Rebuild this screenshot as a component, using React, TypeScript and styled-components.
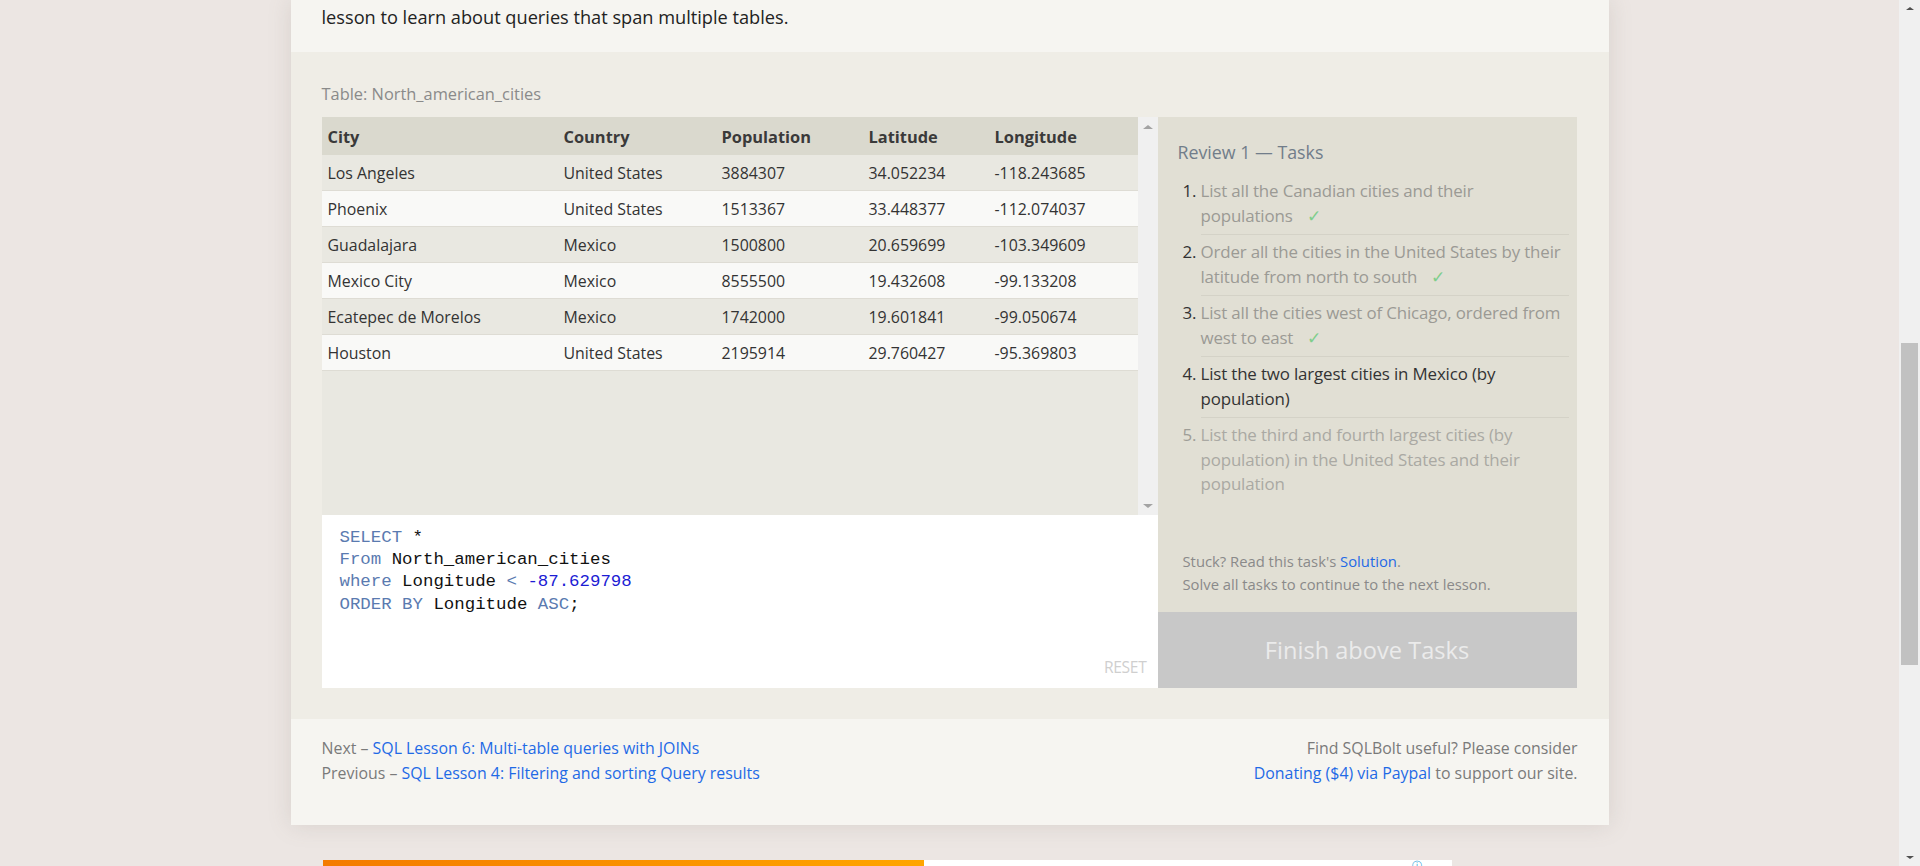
import React from "react";
import styled, { createGlobalStyle } from "styled-components";

const GlobalStyle = createGlobalStyle`
  html, body {
    margin: 0;
    padding: 0;
    height: 100%;
    overflow: hidden;
  }
  body {
    font-family: "Open Sans", "Noto Sans", sans-serif;
    background: #ece6e3;
  }
`;

const Viewport = styled.div`
  display: flex;
  height: 100vh;
`;

const Main = styled.div`
  flex: 1;
  overflow: hidden;
  background: #ece6e3;
`;

const PageScroll = styled.div`
  width: 21px;
  flex-shrink: 0;
  background: #f0f0f0;
  display: flex;
  flex-direction: column;
  align-items: center;
`;

const Arrow = styled.div<{ dir: "up" | "down"; color: string; size: number }>`
  width: 0;
  height: 0;
  border-left: ${(p) => p.size}px solid transparent;
  border-right: ${(p) => p.size}px solid transparent;
  ${(p) =>
    p.dir === "up"
      ? `border-bottom: ${Math.round(p.size * 0.8)}px solid ${p.color};`
      : `border-top: ${Math.round(p.size * 0.8)}px solid ${p.color};`}
`;

const ArrowBox = styled.div`
  height: 17px;
  display: flex;
  align-items: center;
  justify-content: center;
`;

const Track = styled.div`
  flex: 1;
  width: 100%;
  display: flex;
  flex-direction: column;
  align-items: center;
`;

const Thumb = styled.div`
  margin-top: 326px;
  width: 17px;
  height: 322px;
  background: #c1c1c1;
`;

const Card = styled.div`
  width: 1318px;
  margin: 0 auto;
  background: #f6f5f1;
  box-shadow: 0 0 22px rgba(120, 110, 100, 0.18);
`;

const Intro = styled.p`
  margin: 0;
  padding: 4px 31px 21px;
  font-size: 18.2px;
  line-height: 27px;
  color: #222;
`;

const Exercise = styled.section`
  background: #efede6;
  padding: 30px 31px 31px;
`;

const TableLabel = styled.div`
  font-size: 16.4px;
  line-height: 24px;
  color: #8a8a8a;
  margin-bottom: 11px;
`;

const Workspace = styled.div`
  display: flex;
  height: 571px;
`;

const LeftColumn = styled.div`
  width: 836px;
  flex-shrink: 0;
  display: flex;
  flex-direction: column;
`;

const Results = styled.div`
  height: 398px;
  display: flex;
  background: #e9e8e1;
`;

const TableWrap = styled.div`
  flex: 1;
  min-width: 0;
`;

const ResultTable = styled.table`
  width: 100%;
  border-collapse: collapse;
  table-layout: fixed;
  font-size: 15.9px;
  color: #333;
`;

const HeadCell = styled.th<{ w: number }>`
  width: ${(p) => p.w - 6}px;
  text-align: left;
  font-weight: 700;
  font-size: 16.4px;
  height: 38px;
  padding: 0 0 0 6px;
  background: #dad9ce;
  color: #3a3a3a;
`;

const Row = styled.tr<{ odd: boolean }>`
  background: ${(p) => (p.odd ? "#e9e8e1" : "#f9f9f7")};
  border-bottom: 1px solid #dedcd4;
`;

const Cell = styled.td`
  height: 35px;
  padding: 0 0 0 6px;
  white-space: nowrap;
`;

const InnerScroll = styled.div`
  width: 20px;
  flex-shrink: 0;
  background: #f0f0f0;
  display: flex;
  flex-direction: column;
  justify-content: space-between;
  align-items: center;
  padding: 8px 0 7px;
  box-sizing: border-box;
`;

const Editor = styled.div`
  flex: 1;
  background: #fff;
  position: relative;
  padding: 12px 18px;
  box-sizing: border-box;
`;

const Code = styled.pre`
  margin: 0;
  font-family: "Liberation Mono", "DejaVu Sans Mono", monospace;
  font-size: 17.4px;
  line-height: 22.2px;
  color: #111;
`;

const Kw = styled.span`
  color: #5a7ab0;
`;

const Num = styled.span`
  color: #1c1cd4;
`;

const Reset = styled.span`
  position: absolute;
  right: 11px;
  bottom: 10px;
  font-size: 15.6px;
  color: #cfcfcf;
  letter-spacing: -0.3px;
`;

const TaskPanel = styled.aside`
  width: 419px;
  background: #e1dfd4;
  display: flex;
  flex-direction: column;
`;

const TaskBody = styled.div`
  flex: 1;
  padding: 22px 8px 0 20px;
`;

const TaskTitle = styled.h3`
  margin: 0 0 14px;
  font-weight: 400;
  font-size: 17.8px;
  line-height: 26px;
  color: #717d8a;
`;

const TaskList = styled.ol`
  margin: 0;
  padding: 0 0 0 23px;
`;

type TaskState = "done" | "current" | "todo";

const TaskItem = styled.li<{ state: TaskState }>`
  font-size: 16.9px;
  letter-spacing: -0.15px;
  line-height: 24.5px;
  padding: 0 0 6px 0;
  margin-bottom: 5px;
  border-bottom: ${(p) => (p.state === "todo" ? "none" : "1px solid #d4d2c7")};
  color: ${(p) =>
    p.state === "done" ? "#9b9a94" : p.state === "current" ? "#333" : "#aaa9a3"};
  &::marker {
    color: ${(p) => (p.state === "todo" ? "#9e9d97" : "#333")};
  }
`;

const Check = styled.span`
  color: #7fce8c;
  margin-left: 14px;
`;

const Stuck = styled.div`
  padding: 0 20px 16px 25px;
  font-size: 14.8px;
  line-height: 23px;
  color: #8a8a8a;
`;

const Link = styled.a`
  color: #1f6ae6;
  text-decoration: none;
`;

const FinishButton = styled.div`
  height: 76px;
  background: #c8c8c8;
  color: #ebebeb;
  font-size: 23.6px;
  display: flex;
  align-items: center;
  justify-content: center;
`;

const Footer = styled.footer`
  display: flex;
  justify-content: space-between;
  padding: 6px 31px 28px;
  height: 106px;
  box-sizing: border-box;
  font-size: 15.9px;
  line-height: 24.5px;
  color: #7a7a7a;
`;

const FooterCol = styled.div<{ right?: boolean }>`
  text-align: ${(p) => (p.right ? "right" : "left")};
  padding-top: 11px;
`;

const Ad = styled.div`
  width: 1318px;
  margin: 35px auto 0;
  padding-left: 32px;
  box-sizing: border-box;
  display: flex;
  height: 40px;
`;

const AdOrange = styled.div`
  width: 601px;
  background: linear-gradient(90deg, #f47b00, #ffa500);
`;

const AdWhite = styled.div`
  width: 528px;
  background: #fff;
  position: relative;
`;

const AdInfo = styled.span`
  position: absolute;
  right: 30px;
  top: 0;
  font-size: 10px;
  line-height: 10px;
  color: #1a9bd8;
`;

const columns = [
  { name: "City", w: 236 },
  { name: "Country", w: 158 },
  { name: "Population", w: 147 },
  { name: "Latitude", w: 126 },
  { name: "Longitude", w: 149 },
];

const rows = [
  ["Los Angeles", "United States", "3884307", "34.052234", "-118.243685"],
  ["Phoenix", "United States", "1513367", "33.448377", "-112.074037"],
  ["Guadalajara", "Mexico", "1500800", "20.659699", "-103.349609"],
  ["Mexico City", "Mexico", "8555500", "19.432608", "-99.133208"],
  ["Ecatepec de Morelos", "Mexico", "1742000", "19.601841", "-99.050674"],
  ["Houston", "United States", "2195914", "29.760427", "-95.369803"],
];

const tasks: { text: string; state: TaskState }[] = [
  { text: "List all the Canadian cities and their populations", state: "done" },
  {
    text: "Order all the cities in the United States by their latitude from north to south",
    state: "done",
  },
  {
    text: "List all the cities west of Chicago, ordered from west to east",
    state: "done",
  },
  { text: "List the two largest cities in Mexico (by population)", state: "current" },
  {
    text: "List the third and fourth largest cities (by population) in the United States and their population",
    state: "todo",
  },
];

export default function App() {
  return (
    <>
      <GlobalStyle />
      <Viewport>
        <Main>
          <Card>
            <Intro>lesson to learn about queries that span multiple tables.</Intro>
            <Exercise>
              <TableLabel>Table: North_american_cities</TableLabel>
              <Workspace>
                <LeftColumn>
                  <Results>
                    <TableWrap>
                      <ResultTable>
                        <thead>
                          <tr>
                            {columns.map((c) => (
                              <HeadCell key={c.name} w={c.w}>
                                {c.name}
                              </HeadCell>
                            ))}
                          </tr>
                        </thead>
                        <tbody>
                          {rows.map((r, i) => (
                            <Row key={r[0]} odd={i % 2 === 0}>
                              {r.map((v, j) => (
                                <Cell key={j}>{v}</Cell>
                              ))}
                            </Row>
                          ))}
                        </tbody>
                      </ResultTable>
                    </TableWrap>
                    <InnerScroll>
                      <Arrow dir="up" color="#a3a3a3" size={5} />
                      <Arrow dir="down" color="#a3a3a3" size={5} />
                    </InnerScroll>
                  </Results>
                  <Editor>
                    <Code>
                      <Kw>SELECT</Kw> *{"\n"}
                      <Kw>From</Kw> North_american_cities{"\n"}
                      <Kw>where</Kw> Longitude <Kw>&lt;</Kw> <Num>-87.629798</Num>
                      {"\n"}
                      <Kw>ORDER BY</Kw> Longitude <Kw>ASC</Kw>;
                    </Code>
                    <Reset>RESET</Reset>
                  </Editor>
                </LeftColumn>
                <TaskPanel>
                  <TaskBody>
                    <TaskTitle>Review 1 — Tasks</TaskTitle>
                    <TaskList>
                      {tasks.map((t) => (
                        <TaskItem key={t.text} state={t.state}>
                          {t.text}
                          {t.state === "done" && <Check>✓</Check>}
                        </TaskItem>
                      ))}
                    </TaskList>
                  </TaskBody>
                  <Stuck>
                    Stuck? Read this task's <Link href="#">Solution</Link>.
                    <br />
                    Solve all tasks to continue to the next lesson.
                  </Stuck>
                  <FinishButton>Finish above Tasks</FinishButton>
                </TaskPanel>
              </Workspace>
            </Exercise>
            <Footer>
              <FooterCol>
                Next – <Link href="#">SQL Lesson 6: Multi-table queries with JOINs</Link>
                <br />
                Previous – <Link href="#">SQL Lesson 4: Filtering and sorting Query results</Link>
              </FooterCol>
              <FooterCol right>
                Find SQLBolt useful? Please consider
                <br />
                <Link href="#">Donating ($4) via Paypal</Link> to support our site.
              </FooterCol>
            </Footer>
          </Card>
          <Ad>
            <AdOrange />
            <AdWhite>
              <AdInfo>ⓘ</AdInfo>
            </AdWhite>
          </Ad>
        </Main>
        <PageScroll>
          <ArrowBox>
            <Arrow dir="up" color="#505050" size={4} />
          </ArrowBox>
          <Track>
            <Thumb />
          </Track>
          <ArrowBox>
            <Arrow dir="down" color="#505050" size={4} />
          </ArrowBox>
        </PageScroll>
      </Viewport>
    </>
  );
}
